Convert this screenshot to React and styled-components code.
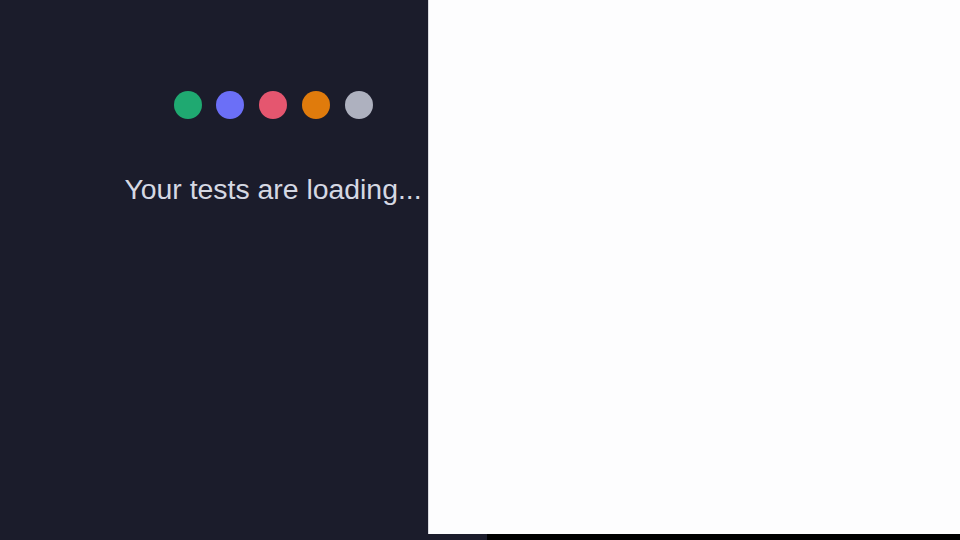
import React from 'react';
import styled, { createGlobalStyle } from 'styled-components';

const GlobalStyle = createGlobalStyle`
  html, body {
    margin: 0;
    padding: 0;
    background: #000;
    overflow: hidden;
  }
`;

const Page = styled.div`
  width: 960px;
  height: 540px;
  display: flex;
  flex-direction: column;
  background: #000;
`;

const Main = styled.div`
  display: flex;
  height: 534px;
`;

const Runner = styled.div`
  width: 428px;
  flex-shrink: 0;
  background: #1b1c2b;
  overflow: hidden;
`;

const Loader = styled.div`
  width: 296px;
  margin-left: 125px;
  padding-top: 91px;
  display: flex;
  flex-direction: column;
  align-items: center;
`;

const Dots = styled.div`
  display: flex;
  gap: 14.75px;
`;

const Dot = styled.span`
  width: 28px;
  height: 28px;
  border-radius: 50%;
  background: ${(p) => p.color};
`;

const Message = styled.div`
  margin-top: 54px;
  font-family: "Liberation Sans", Arial, sans-serif;
  font-size: 28.4px;
  line-height: 32px;
  color: #d5d8e3;
  white-space: nowrap;
`;

const Preview = styled.div`
  flex: 1;
  background: #fdfdfe;
  border-left: 1px solid #d9dae0;
`;

const Footer = styled.div`
  width: 487px;
  height: 6px;
  background: #1b1c2b;
`;

const dotColors = ['#1fa971', '#6b6ff7', '#e5566f', '#e07b0c', '#aeb1bf'];

const App = () => {
  return (
    <Page>
      <GlobalStyle />
      <Main>
        <Runner>
          <Loader>
            <Dots>
              {dotColors.map((c) => (
                <Dot key={c} color={c} />
              ))}
            </Dots>
            <Message>Your tests are loading...</Message>
          </Loader>
        </Runner>
        <Preview />
      </Main>
      <Footer />
    </Page>
  );
};

export default App;
